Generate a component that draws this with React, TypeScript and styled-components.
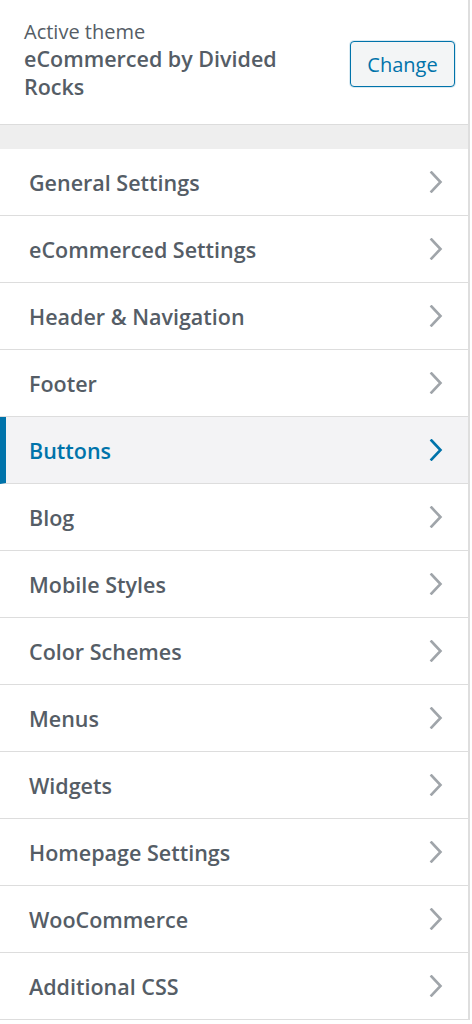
import React from "react";
import styled, { createGlobalStyle } from "styled-components";

const GlobalStyle = createGlobalStyle`
  html, body {
    margin: 0;
    padding: 0;
    background: #ffffff;
  }
  body {
    font-family: "Open Sans", "Noto Sans", Arial, sans-serif;
    -webkit-font-smoothing: antialiased;
  }
  * { box-sizing: border-box; }
`;

const Panel = styled.div`
  width: 470px;
  border-right: 2px solid #dedede;
  background: #ffffff;
  display: flex;
  flex-direction: column;
`;

const ThemeHeader = styled.div`
  height: 125px;
  display: flex;
  align-items: flex-start;
  justify-content: space-between;
  padding: 18px 13px 0 24px;
  border-bottom: 1px solid #dcdcdc;
  background: #ffffff;
`;

const ThemeInfo = styled.div`
  display: flex;
  flex-direction: column;
  width: 305px;
`;

const ThemeLabel = styled.span`
  font-size: 20px;
  line-height: 27px;
  color: #555d66;
  font-weight: 400;
`;

const ThemeName = styled.span`
  font-size: 21.5px;
  line-height: 28px;
  font-weight: 600;
  color: #555d66;
`;

const ChangeButton = styled.button`
  margin-top: 23px;
  width: 105px;
  height: 46px;
  border: 1px solid #0073aa;
  border-radius: 4px;
  background: #f3f5f6;
  color: #0073aa;
  font-family: "Open Sans", "Noto Sans", Arial, sans-serif;
  font-size: 20px;
  font-weight: 400;
  padding: 0;
  box-shadow: 0 0 0 1px rgba(0, 115, 170, 0.15);
  cursor: pointer;
`;

const Spacer = styled.div`
  height: 24px;
  background: #eeeeee;
`;

const Row = styled.div<{ $active?: boolean }>`
  height: 67px;
  display: flex;
  align-items: center;
  justify-content: space-between;
  padding: 0 25px 0 ${(p) => (p.$active ? "23px" : "29px")};
  border-bottom: 1px solid #dddddd;
  border-left: ${(p) => (p.$active ? "6px solid #0073aa" : "none")};
  background: ${(p) => (p.$active ? "#f3f3f5" : "#ffffff")};
  color: ${(p) => (p.$active ? "#0073aa" : "#555d66")};
`;

const RowLabel = styled.span`
  font-size: 21.5px;
  font-weight: 600;
  line-height: 28px;
  margin-top: 1px;
`;

const Chevron = styled.svg<{ $active?: boolean }>`
  width: 14px;
  height: 22px;
  color: ${(p) => (p.$active ? "#0073aa" : "#a0a5aa")};
`;

const items = [
  "General Settings",
  "eCommerced Settings",
  "Header & Navigation",
  "Footer",
  "Buttons",
  "Blog",
  "Mobile Styles",
  "Color Schemes",
  "Menus",
  "Widgets",
  "Homepage Settings",
  "WooCommerce",
  "Additional CSS",
];

export default function App() {
  return (
    <>
      <GlobalStyle />
      <Panel>
        <ThemeHeader>
          <ThemeInfo>
            <ThemeLabel>Active theme</ThemeLabel>
            <ThemeName>eCommerced by Divided Rocks</ThemeName>
          </ThemeInfo>
          <ChangeButton>Change</ChangeButton>
        </ThemeHeader>
        <Spacer />
        {items.map((label) => {
          const active = label === "Buttons";
          return (
            <Row key={label} $active={active}>
              <RowLabel>{label}</RowLabel>
              <Chevron $active={active} viewBox="0 0 14 22" fill="none">
                <path
                  d="M2.5 1.5 L11.5 11 L2.5 20.5"
                  stroke="currentColor"
                  strokeWidth="2.6"
                  strokeLinecap="square"
                  strokeLinejoin="miter"
                />
              </Chevron>
            </Row>
          );
        })}
      </Panel>
    </>
  );
}
